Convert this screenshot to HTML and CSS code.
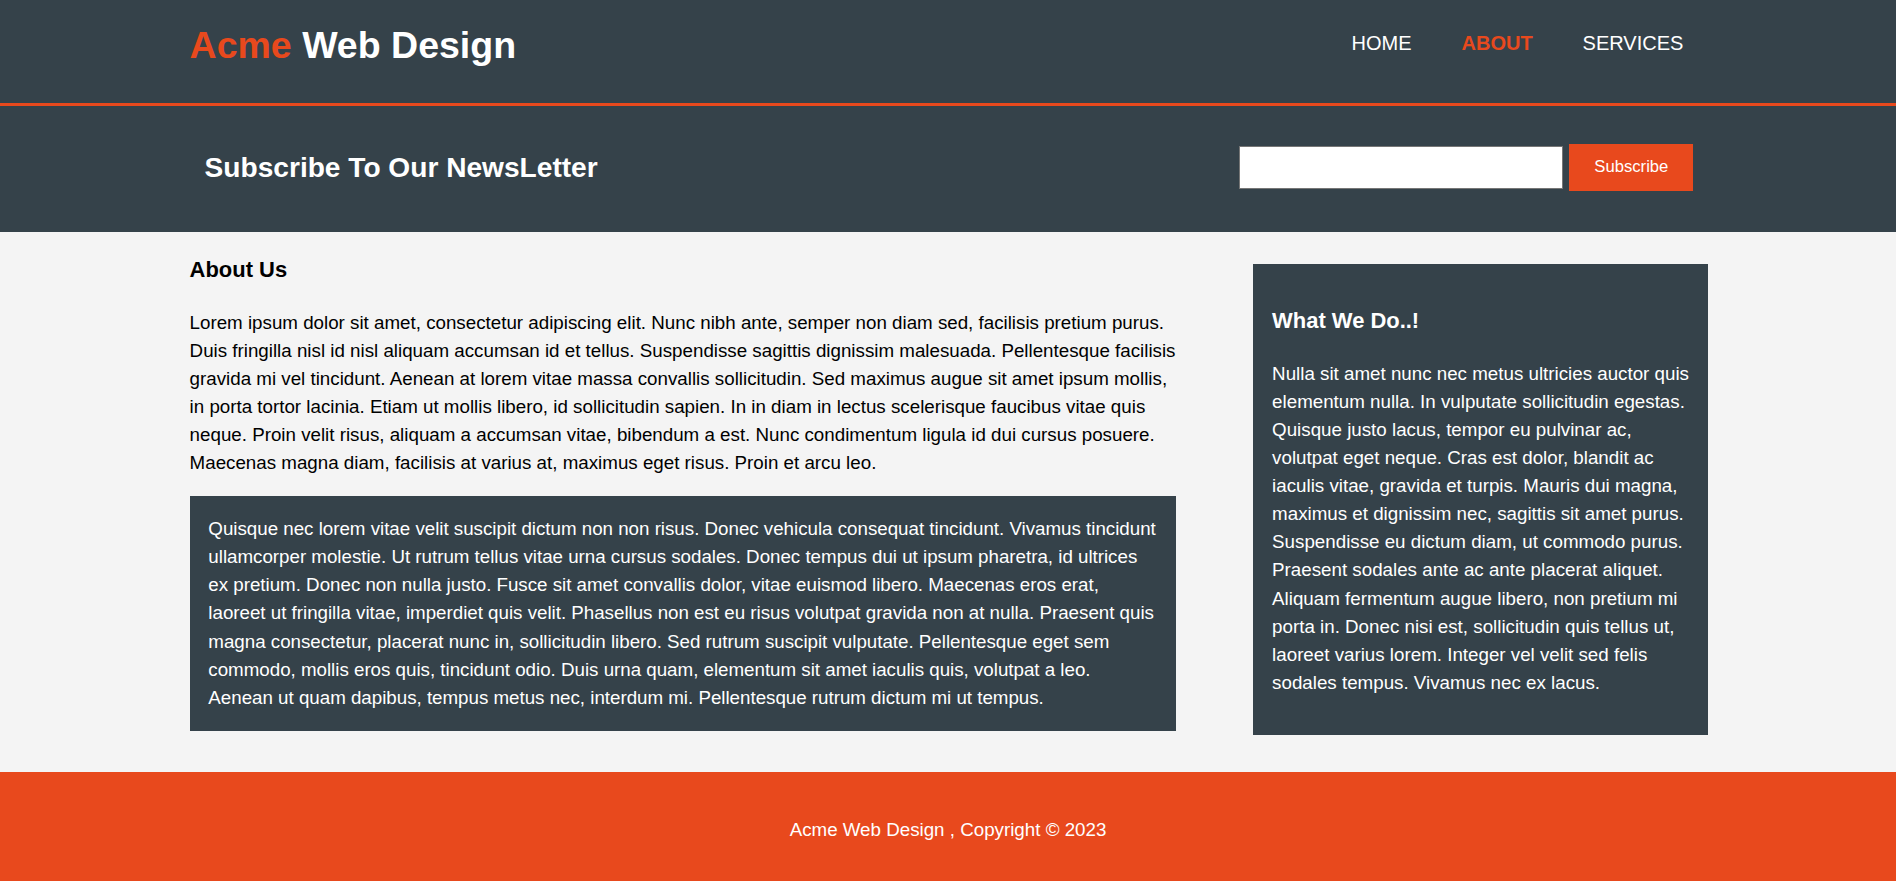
FILE: index.html
```html
<!DOCTYPE html>
<html lang="en">
<head>
<meta charset="utf-8">
<title>Acme Web Design | About</title>
<link rel="stylesheet" href="styles.css">
</head>
<body>
<header class="site-header">
  <div class="container header-row">
    <div class="branding">
      <h1><span class="highlight">Acme</span> Web Design</h1>
    </div>
    <nav class="nav">
      <ul>
        <li><a href="#">Home</a></li>
        <li class="current"><a href="#">About</a></li>
        <li><a href="#">Services</a></li>
      </ul>
    </nav>
  </div>
</header>

<section class="newsletter">
  <div class="container newsletter-row">
    <h1>Subscribe To Our NewsLetter</h1>
    <form class="newsletter-form">
      <input type="email" class="email-input">
      <button type="submit" class="button-1">Subscribe</button>
    </form>
  </div>
</section>

<section class="main">
  <div class="container main-row">
    <article class="main-col">
      <h3 class="page-title">About Us</h3>
      <p>Lorem ipsum dolor sit amet, consectetur adipiscing elit. Nunc nibh ante, semper non diam sed, facilisis pretium purus. Duis fringilla nisl id nisl aliquam accumsan id et tellus. Suspendisse sagittis dignissim malesuada. Pellentesque facilisis gravida mi vel tincidunt. Aenean at lorem vitae massa convallis sollicitudin. Sed maximus augue sit amet ipsum mollis, in porta tortor lacinia. Etiam ut mollis libero, id sollicitudin sapien. In in diam in lectus scelerisque faucibus vitae quis neque. Proin velit risus, aliquam a accumsan vitae, bibendum a est. Nunc condimentum ligula id dui cursus posuere. Maecenas magna diam, facilisis at varius at, maximus eget risus. Proin et arcu leo.</p>
      <p class="dark">Quisque nec lorem vitae velit suscipit dictum non non risus. Donec vehicula consequat tincidunt. Vivamus tincidunt ullamcorper molestie. Ut rutrum tellus vitae urna cursus sodales. Donec tempus dui ut ipsum pharetra, id ultrices ex pretium. Donec non nulla justo. Fusce sit amet convallis dolor, vitae euismod libero. Maecenas eros erat, laoreet ut fringilla vitae, imperdiet quis velit. Phasellus non est eu risus volutpat gravida non at nulla. Praesent quis magna consectetur, placerat nunc in, sollicitudin libero. Sed rutrum suscipit vulputate. Pellentesque eget sem commodo, mollis eros quis, tincidunt odio. Duis urna quam, elementum sit amet iaculis quis, volutpat a leo. Aenean ut quam dapibus, tempus metus nec, interdum mi. Pellentesque rutrum dictum mi ut tempus.</p>
    </article>

    <aside class="sidebar">
      <div class="dark">
        <h3>What We Do..!</h3>
        <p>Nulla sit amet nunc nec metus ultricies auctor quis elementum nulla. In vulputate sollicitudin egestas. Quisque justo lacus, tempor eu pulvinar ac, volutpat eget neque. Cras est dolor, blandit ac iaculis vitae, gravida et turpis. Mauris dui magna, maximus et dignissim nec, sagittis sit amet purus. Suspendisse eu dictum diam, ut commodo purus. Praesent sodales ante ac ante placerat aliquet. Aliquam fermentum augue libero, non pretium mi porta in. Donec nisi est, sollicitudin quis tellus ut, laoreet varius lorem. Integer vel velit sed felis sodales tempus. Vivamus nec ex lacus.</p>
      </div>
    </aside>
  </div>
</section>

<footer class="site-footer">
  <p>Acme Web Design , Copyright &copy; 2023</p>
</footer>
</body>
</html>
```

FILE: styles.css
```css
html {
  scrollbar-width: none;
}

body {
  margin: 0;
  padding: 0;
  font-family: "Liberation Sans", Arial, Helvetica, sans-serif;
  font-size: 18.75px;
  line-height: 1.5;
  color: #000000;
  background-color: #f4f4f4;
}

.container {
  width: 80%;
  margin: 0 auto;
}

ul {
  margin: 0;
  padding: 0;
  list-style: none;
}

/* Header */
.site-header {
  background: #35424a;
  color: #ffffff;
  padding-top: 15px;
  min-height: 88px;
  border-bottom: 3px solid #e8491d;
  box-sizing: content-box;
}

.header-row {
  display: flex;
  justify-content: space-between;
  align-items: flex-start;
}

.branding h1 {
  margin: 0;
  font-size: 37.5px;
  line-height: 60px;
  font-weight: bold;
}

.highlight {
  color: #e8491d;
}

.nav {
  margin-top: 12.5px;
}

.nav ul {
  display: flex;
}

.nav li {
  padding: 0 25px;
  line-height: 30px;
}

.nav li:last-child {
  padding-right: 23px;
}

.nav a {
  color: #ffffff;
  text-decoration: none;
  text-transform: uppercase;
  font-size: 20px;
}

.nav .current a {
  color: #e8491d;
  font-weight: bold;
}

/* Newsletter */
.newsletter {
  background: #35424a;
  color: #ffffff;
  padding: 18.75px 18.75px 41px;
}

.newsletter-row {
  display: flex;
  justify-content: space-between;
  align-items: flex-start;
}

.newsletter h1 {
  margin: 22.5px 0 0;
  font-size: 28.125px;
  line-height: 42px;
  font-weight: bold;
}

.newsletter-form {
  margin-top: 18.75px;
  margin-right: -2px;
  display: flex;
  align-items: center;
  gap: 6px;
}

.email-input {
  box-sizing: content-box;
  width: 312.5px;
  height: 31.25px;
  padding: 5px;
  border: 1px solid #767676;
  background: #ffffff;
  font-family: inherit;
  font-size: 16.7px;
  margin: 0;
}

.button-1 {
  height: 47.5px;
  background: #e8491d;
  border: 0;
  padding: 0 25px;
  color: #ffffff;
  font-family: "Liberation Sans", Arial, sans-serif;
  font-size: 16.67px;
  margin: 0;
}

/* Main */
.main-row {
  display: flex;
  justify-content: space-between;
  align-items: flex-start;
}

.main-col {
  width: 65%;
}

.main-col h3,
.sidebar h3 {
  font-size: 21.94px;
  margin: 21.94px 0;
  line-height: 1.5;
  font-weight: bold;
}

.main-col p,
.sidebar p {
  margin: 18.75px 0;
}

.main-col p.dark {
  margin: 12.5px 0;
  letter-spacing: -0.015px;
}

.dark {
  padding: 18.75px;
  background: #35424a;
  color: #ffffff;
}

.sidebar {
  width: 30%;
  margin-right: -2px;
}

.sidebar .dark {
  margin-top: 32px;
  margin-bottom: 12.5px;
}

/* Footer */
.site-footer {
  margin-top: 25px;
  padding: 25px 25px 18px;
  color: #ffffff;
  background-color: #e8491d;
  text-align: center;
}

.site-footer p {
  margin: 18.75px 0;
}
```
